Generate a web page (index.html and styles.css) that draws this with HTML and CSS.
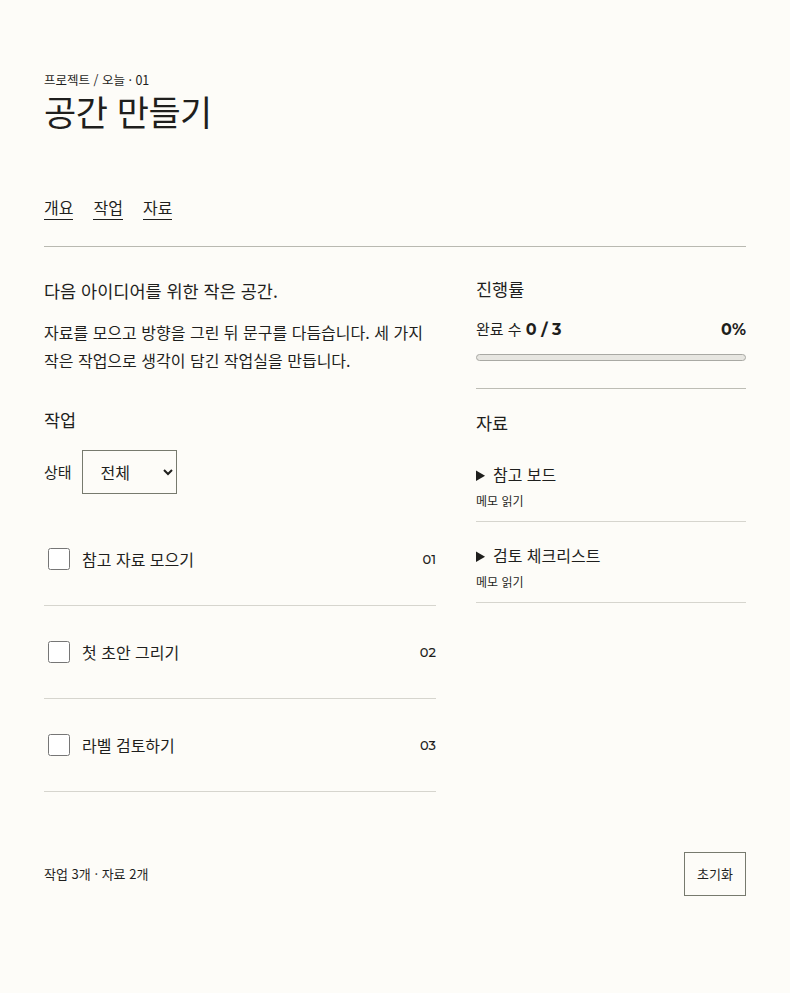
FILE: index.html
```html
<!DOCTYPE html>
<html lang="ko">
<head>
<meta charset="utf-8">
<title>공간 만들기</title>
<link rel="stylesheet" href="styles.css">
</head>
<body>
<div class="page">
  <header class="head">
    <p class="crumb">프로젝트 / 오늘 · 01</p>
    <h1 class="title">공간 만들기</h1>
  </header>
  <nav class="tabs">
    <a class="tab" href="#">개요</a>
    <a class="tab" href="#">작업</a>
    <a class="tab" href="#">자료</a>
  </nav>
  <main class="cols">
    <section class="main-col">
      <p class="lead">다음 아이디어를 위한 작은 공간.</p>
      <p class="desc">자료를 모으고 방향을 그린 뒤 문구를 다듬습니다. 세 가지 작은 작업으로 생각이 담긴 작업실을 만듭니다.</p>
      <h2 class="sec-title">작업</h2>
      <div class="filter">
        <label class="filter-label" for="st">상태</label>
        <select id="st" class="select">
          <option>전체</option>
        </select>
      </div>
      <ul class="tasks">
        <li class="task"><input type="checkbox" class="check"><span class="task-name">참고 자료 모으기</span><span class="task-num num">01</span></li>
        <li class="task"><input type="checkbox" class="check"><span class="task-name">첫 초안 그리기</span><span class="task-num num">02</span></li>
        <li class="task"><input type="checkbox" class="check"><span class="task-name">라벨 검토하기</span><span class="task-num num">03</span></li>
      </ul>
    </section>
    <aside class="side">
      <section class="progress">
        <h2 class="sec-title">진행률</h2>
        <div class="prog-row"><span>완료 수 <b class="num">0 / 3</b></span><b class="num">0%</b></div>
        <div class="bar"><div class="bar-fill" style="width:0%"></div></div>
      </section>
      <section class="refs">
        <h2 class="sec-title">자료</h2>
        <div class="ref">
          <details><summary>참고 보드</summary><p>참고 이미지를 모은 보드입니다.</p></details>
          <a class="memo" href="#">메모 읽기</a>
        </div>
        <div class="ref">
          <details><summary>검토 체크리스트</summary><p>검토할 항목 목록입니다.</p></details>
          <a class="memo" href="#">메모 읽기</a>
        </div>
      </section>
    </aside>
  </main>
  <footer class="foot">
    <span class="foot-text">작업 3개 · 자료 2개</span>
    <button class="reset" type="button">초기화</button>
  </footer>
</div>
</body>
</html>
```
FILE: styles.css
```css
* { box-sizing: border-box; }
html, body { margin: 0; }
body {
  background: #fdfcf8;
  color: #1f1f1d;
  font-family: "Noto Sans CJK KR", "Noto Sans", sans-serif;
}
.num { font-family: "Montserrat", "Noto Sans CJK KR", sans-serif; }
.page { padding: 72px 44px 40px; }
.crumb { margin: 0; font-size: 12.5px; line-height: 16px; }
.title { margin: 2px 0 0; font-size: 35px; font-weight: 400; line-height: 42px; letter-spacing: -0.5px; }
.tabs { display: flex; gap: 20px; margin-top: 65px; padding-bottom: 26px; border-bottom: 1px solid #b9b9b1; }
.tab { color: inherit; text-decoration: none; font-size: 16px; line-height: 20px; border-bottom: 1px solid #1f1f1d; padding-bottom: 2px; }
.cols { display: grid; grid-template-columns: 392px 270px; gap: 40px; padding-top: 30px; }
.sec-title { margin: 0; font-size: 17.5px; font-weight: 400; line-height: 24px; }
.lead { margin: 2px 0 0; font-size: 17.5px; line-height: 24px; }
.desc { margin: 15px 0 0; font-size: 16px; line-height: 28px; }
.main-col .sec-title { margin-top: 34px; }
.filter { display: flex; align-items: center; gap: 10px; margin-top: 18px; }
.filter-label { font-size: 15px; line-height: 20px; }
.select { width: 95px; height: 44px; padding: 0 10px 0 14px; font: inherit; font-size: 16px; line-height: 20px; color: inherit; background: transparent; border: 1px solid #777a6e; border-radius: 0; }
.tasks { list-style: none; margin: 19px 0 0; padding: 0; }
.task { display: flex; align-items: center; height: 93px; border-bottom: 1px solid #d6d5ce; }
.check { width: 22px; height: 22px; margin: 0 12px 0 4px; }
.task-name { flex: 1; font-size: 16px; line-height: 22px; }
.task-num { font-size: 13px; line-height: 16px; font-weight: 500; }
.progress { padding-bottom: 27px; border-bottom: 1px solid #bdbdb5; }
.prog-row { display: flex; justify-content: space-between; align-items: baseline; margin-top: 18px; font-size: 15px; line-height: 20px; }
.prog-row b { font-weight: 700; font-size: 16px; }
.bar { margin-top: 14px; height: 7px; border: 1px solid #a9a9a4; border-radius: 4px; background: #e7e6e1; overflow: hidden; }
.bar-fill { height: 100%; background: #1f1f1d; }
.refs { padding-top: 22px; }
.ref { padding: 22px 0 12px; border-bottom: 1px solid #d6d5ce; }
.refs .sec-title + .ref { padding-top: 28px; }
.ref summary { font-size: 16px; line-height: 22px; cursor: pointer; }
.ref details p { margin: 4px 0; font-size: 13px; line-height: 18px; }
.memo { display: block; margin-top: 8px; font-size: 12px; line-height: 16px; color: inherit; text-decoration: none; }
.foot { display: flex; justify-content: space-between; align-items: center; margin-top: 60px; }
.foot-text { font-size: 13px; line-height: 18px; }
.reset { height: 44px; padding: 0 12px; font: inherit; font-size: 13px; line-height: 18px; color: inherit; background: transparent; border: 1px solid #777a6e; border-radius: 0; }
```
